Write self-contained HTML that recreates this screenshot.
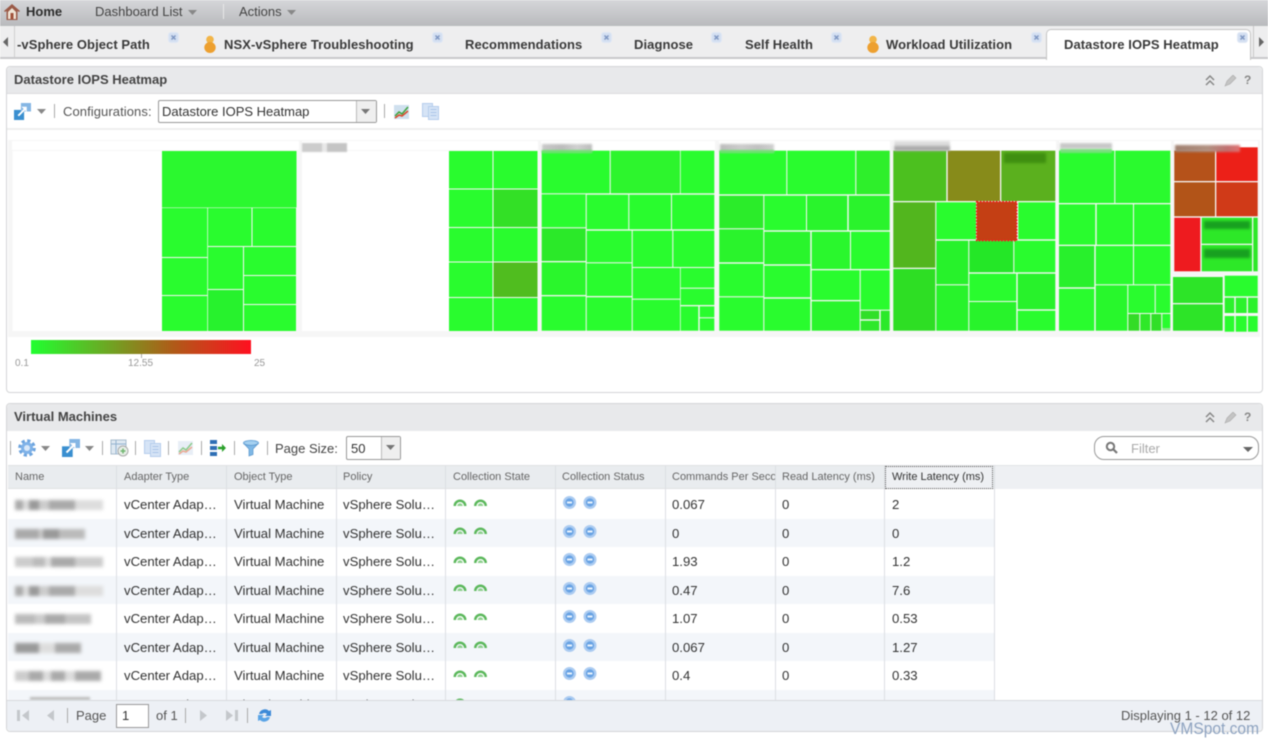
<!DOCTYPE html>
<html><head><meta charset="utf-8"><title>Datastore IOPS Heatmap</title>
<style>
html,body{margin:0;padding:0;background:#fff;width:1268px;height:739px;overflow:hidden}
#r{position:absolute;left:0;top:0;width:1268px;height:739px;overflow:hidden;font-family:"Liberation Sans",sans-serif;color:#333;filter:blur(.45px);background:#fff}
#r div,#r span.t,#r svg{position:absolute}
.t{position:absolute;white-space:nowrap}
.tab{font-size:13px;font-weight:bold;color:#3a3a3a;top:37px;letter-spacing:.07px}
.ph{font-size:13px;font-weight:bold;color:#444;left:14px}
.th{font-size:11px;color:#666;top:471px}
.c{font-size:13.15px;color:#333;white-space:nowrap}
.sep{width:1px;background:#aaa}
.vl{width:1px;top:465px;height:235px;background:#dcdfe3}
.nm{left:15px;width:88px;height:10px;filter:blur(1.8px)}
</style></head><body><div id="r">
<svg width="0" height="0"><defs>
<g id="x"><rect x=".5" y=".5" width="10" height="10" rx="2.500" fill="#d3dff1" stroke="#e0e8f5"/><path d="M3.500 3.500l4 4M7.500 3.500l-4 4" stroke="#7f97c2" stroke-width="1.500"/></g>
<g id="p"><circle cx="7" cy="4.500" r="3.800" fill="#f2b548"/><ellipse cx="7" cy="12.500" rx="5.700" ry="5.500" fill="#eda030"/></g>
<g id="a"><path d="M.5 8a6.500 6.500 0 0 1 13 0h-2.500a4 4 0 0 0-8 0z" fill="#5cb85c"/><path d="M4.300 8a2.700 2.700 0 0 1 5.400 0z" fill="#8ed08e"/></g>
<g id="b"><circle cx="6.500" cy="6.500" r="6.500" fill="#abcbf1"/><circle cx="6.500" cy="6.500" r="4.100" fill="#68a3e4"/><rect x="4" y="5.500" width="5" height="2" fill="#e8f2fc"/></g>
<g id="link"><rect x="0" y="6.500" width="9.500" height="9.500" fill="#3a8fd0"/><rect x="6.500" y="0" width="9.500" height="8" fill="#85b6e4"/><path d="M4 12l6-6" stroke="#fff" stroke-width="1.800" fill="none"/><path d="M7 3.500h5v5z" fill="#fff"/></g>
<g id="cp"><rect x=".5" y=".5" width="10" height="13" fill="#d6e4f6" stroke="#b5cdec"/><rect x="6.500" y="3.500" width="10" height="13" fill="#d6e4f6" stroke="#b5cdec"/><path d="M8.500 6.500h6M8.500 9.500h6M8.500 12.500h6" stroke="#a9c4e8"/></g>
<g id="ch"><rect x="0" y="1" width="15" height="14" fill="#e8eef6"/><path d="M1 12l4-4 3 2 6-7" stroke="#8ccb8c" stroke-width="1.500" fill="none"/><path d="M1 14l4-3 3 1 6-5" stroke="#eba994" stroke-width="1.500" fill="none"/></g>
</defs></svg>

<!-- top bar -->
<div style="left:0;top:0;width:1268px;height:26px;background:linear-gradient(#d5d6d9,#b9babd)"></div>
<svg style="left:4px;top:3px" width="16" height="17" viewBox="0 0 16 17"><path d="M8 1L0 8l1 1 1.500-1v9h11V8l1.500 1 1-1z" fill="#9a5a48"/><path d="M4 9l4-4 4 4v7H4z" fill="#efe3d4"/><rect x="6.500" y="10" width="3" height="6" fill="#a0523a"/></svg>
<span class="t" style="left:26px;top:4px;font-size:13px;font-weight:bold;color:#2c2c2c">Home</span>
<span class="t" style="left:95px;top:4px;font-size:13px;color:#444">Dashboard List</span>
<svg style="left:188px;top:10px" width="10" height="6"><path d="M0 0h9L4.500 5z" fill="#888"/></svg>
<div class="sep" style="left:223px;top:4px;height:15px;background:#e8e8e8"></div>
<span class="t" style="left:239px;top:4px;font-size:13px;color:#444">Actions</span>
<svg style="left:287px;top:10px" width="10" height="6"><path d="M0 0h9L4.500 5z" fill="#888"/></svg>

<!-- tabs -->
<div style="left:0;top:26px;width:1268px;height:31px;background:#eeeeef;border-bottom:2px solid #c9c9cb"></div>
<div style="left:14px;top:26px;width:1px;height:31px;background:#d0d0d0"></div>
<svg style="left:3px;top:37px" width="6" height="10"><path d="M5 0v10L0 5z" fill="#666"/></svg>
<div style="left:1253px;top:26px;width:1px;height:31px;background:#c8c8c8"></div>
<svg style="left:1259px;top:37px" width="6" height="10"><path d="M0 0v10l5-5z" fill="#666"/></svg>
<span class="t tab" style="left:17px">-vSphere Object Path</span>
<svg style="left:168px;top:32px" width="11" height="11"><use href="#x"/></svg>
<svg style="left:203px;top:35px" width="14" height="18"><use href="#p"/></svg>
<span class="t tab" style="left:224px">NSX-vSphere Troubleshooting</span>
<svg style="left:432px;top:32px" width="11" height="11"><use href="#x"/></svg>
<span class="t tab" style="left:465px">Recommendations</span>
<svg style="left:601px;top:32px" width="11" height="11"><use href="#x"/></svg>
<span class="t tab" style="left:634px">Diagnose</span>
<svg style="left:711px;top:32px" width="11" height="11"><use href="#x"/></svg>
<span class="t tab" style="left:745px">Self Health</span>
<svg style="left:831px;top:32px" width="11" height="11"><use href="#x"/></svg>
<svg style="left:866px;top:35px" width="14" height="18"><use href="#p"/></svg>
<span class="t tab" style="left:886px">Workload Utilization</span>
<svg style="left:1031px;top:32px" width="11" height="11"><use href="#x"/></svg>
<div style="left:1046px;top:29px;width:203px;height:30px;background:#fff;border:1px solid #c4c4c4;border-bottom:0;border-radius:5px 5px 0 0"></div>
<span class="t tab" style="left:1064px">Datastore IOPS Heatmap</span>
<svg style="left:1237px;top:32px" width="11" height="11"><use href="#x"/></svg>

<!-- panel 1 -->
<div style="left:6px;top:66px;width:1255px;height:325px;border:1px solid #d4d5d7;border-radius:4px;background:#fff"></div>
<div style="left:7px;top:67px;width:1255px;height:26px;background:#e8e9eb;border-bottom:1px solid #dcdde0;border-radius:4px 4px 0 0"></div>
<span class="t ph" style="top:72px">Datastore IOPS Heatmap</span>
<svg style="left:1205px;top:75px" width="46" height="12" viewBox="0 0 46 12"><path d="M1 5l4-4 4 4M1 10l4-4 4 4" stroke="#888" stroke-width="1.500" fill="none"/><path d="M20 11l2-5 6-6 3 3-6 6z" fill="#c4c4c4" stroke="#aaa" stroke-width=".6"/></svg>
<span class="t" style="left:1244px;top:73px;font-size:12px;font-weight:bold;color:#888">?</span>

<svg style="left:14px;top:103px" width="17" height="17" viewBox="0 0 16 16"><use href="#link"/></svg>
<svg style="left:37px;top:109px" width="10" height="6"><path d="M0 0h9L4.500 5z" fill="#888"/></svg>
<div class="sep" style="left:54px;top:104px;height:14px"></div>
<span class="t" style="left:63px;top:104px;font-size:13px;color:#555;letter-spacing:.08px">Configurations:</span>
<div style="left:158px;top:100px;width:217px;height:21px;border:1px solid #999;border-radius:2px;background:#fff"></div>
<div style="left:356px;top:101px;width:19px;height:21px;background:#efefef;border-left:1px solid #bbb"></div>
<svg style="left:361px;top:109px" width="10" height="6"><path d="M0 0h9L4.500 5z" fill="#777"/></svg>
<span class="t" style="left:162px;top:104px;font-size:13px;color:#333">Datastore IOPS Heatmap</span>
<div class="sep" style="left:384px;top:104px;height:14px"></div>
<svg style="left:394px;top:104px" width="16" height="16"><rect x="0" y="1" width="15" height="14" fill="#cfe0ee"/><path d="M1 12l4-4 3 2 6-7" stroke="#3ea23e" stroke-width="1.500" fill="none"/><path d="M1 14l4-3 3 1 6-5" stroke="#d9482a" stroke-width="1.500" fill="none"/></svg>
<svg style="left:422px;top:103px" width="17" height="17"><use href="#cp"/></svg>

<!-- heatmap -->
<div style="left:7px;top:128px;width:1255px;height:2px;background:#eeeeee"></div>
<svg style="left:8px;top:130px" width="1254" height="208" viewBox="8 130 1254 208">
<rect x="8" y="140" width="1252" height="197" fill="#f6f6f6"/>
<rect x="12" y="141" width="287" height="9" fill="#fff"/><rect x="302" y="141" width="236" height="9" fill="#fff"/><rect x="541" y="141" width="174" height="9" fill="#fff"/><rect x="719" y="141" width="171" height="9" fill="#fff"/><rect x="893" y="141" width="163" height="9" fill="#fff"/><rect x="1059" y="141" width="112" height="9" fill="#fff"/><rect x="1174" y="141" width="84" height="9" fill="#fff"/>
<rect x="12.500" y="151" width="149.500" height="180" fill="#fff"/><rect x="302" y="151" width="147" height="180" fill="#fff"/>
<g fill="#29fc2e">
<rect x="162" y="151" width="134.500" height="56.500" fill="#2bf82f"/>
<rect x="162" y="208" width="45.300" height="49"/><rect x="162" y="258" width="45.300" height="37"/><rect x="162" y="296" width="45.300" height="35"/>
<rect x="208" y="208" width="43.500" height="38"/><rect x="252.500" y="208" width="43.500" height="38"/>
<rect x="208" y="247" width="35" height="42"/><rect x="208" y="290" width="35" height="41" fill="#27f22d"/>
<rect x="244" y="247" width="52" height="28"/><rect x="244" y="276" width="52" height="28"/><rect x="244" y="305" width="52" height="26"/>
<rect x="449" y="151" width="43.500" height="37.500"/><rect x="493.500" y="151" width="44" height="37.500"/>
<rect x="449" y="189.500" width="43.500" height="37.500"/><rect x="493.500" y="189.500" width="44" height="37.500" fill="#33e026"/>
<rect x="449" y="228" width="43.500" height="33.500"/><rect x="493.500" y="228" width="44" height="33.500"/>
<rect x="449" y="262.500" width="43.500" height="34.500"/><rect x="493.500" y="262.500" width="44" height="34.500" fill="#50bd1f"/>
<rect x="449" y="298" width="43.500" height="33"/><rect x="493.500" y="298" width="44" height="33"/>
<!-- g3 -->
<rect x="541.700" y="150.700" width="68" height="42.600"/><rect x="610.700" y="150.700" width="69.300" height="42.600" fill="#2df52d"/><rect x="680.700" y="150.700" width="33.600" height="42.600"/>
<rect x="541.700" y="194.300" width="44" height="33"/><rect x="541.700" y="228.300" width="44" height="32.700" fill="#2be929"/><rect x="541.700" y="262.300" width="44" height="32.700" fill="#2af62c"/><rect x="541.700" y="296.300" width="44" height="34.400"/>
<rect x="586.700" y="194.700" width="41.600" height="34.600"/><rect x="629.300" y="194.700" width="41.700" height="34.600"/><rect x="672" y="194.700" width="42.300" height="34.600"/>
<rect x="586.700" y="230.700" width="45" height="31.600"/><rect x="586.700" y="263.300" width="45" height="32.700"/><rect x="586.700" y="297.300" width="45" height="33.400"/>
<rect x="632.700" y="230.700" width="39.600" height="36.300"/><rect x="673.300" y="230.700" width="41" height="36.300"/>
<rect x="632.700" y="268" width="47.300" height="30.700"/><rect x="632.700" y="299.700" width="47.300" height="31"/>
<rect x="680.700" y="268" width="33.600" height="19.700"/><rect x="680.700" y="288.700" width="33.600" height="16.300"/><rect x="680.700" y="306.300" width="17.600" height="24.400"/><rect x="699.700" y="306.300" width="14.600" height="11"/><rect x="699.700" y="318.300" width="14.600" height="12.400"/>
<!-- g4 -->
<rect x="719.300" y="150.700" width="67" height="43.600"/><rect x="787.300" y="150.700" width="68" height="43.600"/><rect x="856.300" y="150.700" width="33.400" height="43.600" fill="#2eef2b"/>
<rect x="719.300" y="195.700" width="44" height="32.600" fill="#2bec2a"/><rect x="719.300" y="229.300" width="44" height="33" fill="#2af32c"/><rect x="719.300" y="263.700" width="44" height="32.600"/><rect x="719.300" y="297.300" width="44" height="33.400"/>
<rect x="764.300" y="195.700" width="41.700" height="34.600"/><rect x="807" y="195.700" width="40.300" height="34.600" fill="#29f42c"/><rect x="848.700" y="195.700" width="41" height="34.600" fill="#2af32c"/>
<rect x="764.300" y="231.700" width="46" height="32.600" fill="#29f52c"/><rect x="764.300" y="265.700" width="46" height="31.600"/><rect x="764.300" y="298.700" width="46" height="32"/>
<rect x="811.700" y="231.700" width="38.300" height="37.300" fill="#2af72d"/><rect x="851" y="231.700" width="38.700" height="37.300"/>
<rect x="811.700" y="270.300" width="48" height="29.700"/><rect x="811.700" y="301.300" width="48" height="29.400" fill="#29f52c"/>
<rect x="860.700" y="270.300" width="29" height="39.400"/><rect x="860.700" y="310.700" width="18.600" height="8.600" fill="#30df28"/><rect x="860.700" y="320.700" width="18.600" height="10" fill="#2ee82a"/><rect x="880.700" y="310.700" width="9" height="20" fill="#2be92a"/>
<!-- g5 -->
<rect x="893.300" y="150.700" width="53" height="50.300" fill="#4cc01f"/><rect x="947.700" y="150.700" width="52.300" height="50.300" fill="#878b1a"/><rect x="1001.300" y="150.700" width="54" height="50.300" fill="#5bb01e"/>
<rect x="893.300" y="202.300" width="42" height="65.400" fill="#52b61e"/><rect x="893.300" y="269" width="42" height="61.700" fill="#2ede24"/>
<rect x="936.300" y="202.300" width="39.700" height="37"/><rect x="1018.300" y="202.300" width="37" height="37"/>
<rect x="936.300" y="240.700" width="32" height="43.600" fill="#27f22b"/><rect x="936.300" y="285.300" width="32" height="45.400" fill="#28f32b"/>
<rect x="969.300" y="240.700" width="44" height="31.600" fill="#24e727"/><rect x="1014.300" y="240.700" width="41" height="31.600"/>
<rect x="969.300" y="273.700" width="47" height="27.300"/><rect x="969.300" y="302" width="47" height="28.700" fill="#28f32b"/>
<rect x="1017.700" y="273.700" width="37.600" height="35.600" fill="#28f22b"/><rect x="1017.700" y="310.700" width="37.600" height="20"/>
<rect x="976.700" y="201.800" width="40" height="38.800" fill="#c43f14" stroke="#f5151c" stroke-width="1.600" stroke-dasharray="1.600 1.600"/>
<!-- g6 -->
<rect x="1059" y="150.700" width="55.300" height="52.300"/><rect x="1115.300" y="150.700" width="55" height="52.300" fill="#2afa2e"/>
<rect x="1059" y="204.300" width="36.300" height="40.400"/><rect x="1096.700" y="204.300" width="36.300" height="40.400"/><rect x="1134" y="204.300" width="36.300" height="40.400"/>
<rect x="1059" y="246" width="35.300" height="41.300" fill="#28f02c"/><rect x="1059" y="288.700" width="35.300" height="42"/>
<rect x="1095.700" y="246" width="37.300" height="38.300"/><rect x="1134" y="246" width="36.300" height="38.300"/>
<rect x="1095.700" y="285.300" width="31.600" height="45.400" fill="#28f72c"/><rect x="1128.300" y="285.300" width="26.400" height="27.700"/><rect x="1155.700" y="285.300" width="14.600" height="27.700"/>
<rect x="1128.300" y="314" width="11" height="16.700" fill="#33dc27"/><rect x="1140.300" y="314" width="10" height="16.700" fill="#2fe829"/><rect x="1151.300" y="314" width="10" height="16.700" fill="#31df28"/><rect x="1162.300" y="314" width="8" height="14"/><rect x="1162.300" y="328" width="8" height="2.700" fill="#8ee88e"/>
<!-- g7 -->
<rect x="1174.300" y="150.700" width="40.700" height="30.300" fill="#b5521a"/><rect x="1174.300" y="182.300" width="40.700" height="34" fill="#b25418"/>
<rect x="1216.300" y="147.300" width="41.400" height="33.700" fill="#ec2018"/><rect x="1216.300" y="182.300" width="41.400" height="34" fill="#d03a18"/>
<rect x="1174.300" y="217.700" width="26" height="53.600" fill="#ee1b1f"/>
<rect x="1201.700" y="217.700" width="50.300" height="26" fill="#2de828"/><rect x="1201.700" y="245" width="50.300" height="26.300" fill="#2de828"/><rect x="1253.300" y="217.700" width="4.400" height="53.600" fill="#2de828"/>
<rect x="1173" y="277" width="49.700" height="26" fill="#2de428"/><rect x="1173" y="304.300" width="49.700" height="26.400" fill="#2de428"/>
<rect x="1224.700" y="275.700" width="33" height="20.600"/>
<rect x="1224.700" y="297.700" width="9.600" height="15.300" fill="#2bf22c"/><rect x="1235.700" y="297.700" width="11" height="15.300" fill="#2bf22c"/><rect x="1248" y="297.700" width="9.700" height="15.300" fill="#2bf22c"/>
<rect x="1224.700" y="316" width="9.600" height="15.700"/><rect x="1235.700" y="316" width="11" height="15.700"/><rect x="1248" y="316" width="9.700" height="15.700"/>
</g>
</svg>
<!-- blurred heatmap labels -->
<div style="left:302px;top:143px;width:45px;height:9px;filter:blur(.9px);background:linear-gradient(90deg,#ccc 0 20px,#e8e8e8 20px 25px,#c4c4c4 25px 45px)"></div>
<div style="left:542px;top:144px;width:50px;height:8px;filter:blur(1px);background:linear-gradient(90deg,#c8c8c8,#bbb 40%,#d0d0d0 70%,#bbb)"></div>
<div style="left:542px;top:150px;width:50px;height:3px;background:#6ee070;filter:blur(.7px)"></div>
<div style="left:720px;top:144px;width:54px;height:8px;filter:blur(1px);background:linear-gradient(90deg,#bbb,#ccc 40%,#c0c0c0 70%,#d0d0d0)"></div>
<div style="left:720px;top:150px;width:54px;height:3px;background:#6ee070;filter:blur(.7px)"></div>
<div style="left:894px;top:141px;width:56px;height:10px;filter:blur(1px);background:linear-gradient(#ddd 40%,#aaa 60%)"></div>
<div style="left:1060px;top:143px;width:52px;height:6px;filter:blur(1px);background:#c8c8c8"></div>
<div style="left:1060px;top:149px;width:52px;height:4px;filter:blur(.7px);background:#7ade7e"></div>
<div style="left:1175px;top:145px;width:65px;height:7px;filter:blur(1px);background:linear-gradient(90deg,#a08070,#b09080 50%,#c07070 80%,#e07070)"></div>
<div style="left:1004px;top:153px;width:42px;height:10px;filter:blur(1.4px);background:#3f8f10"></div>
<div style="left:1204px;top:221px;width:46px;height:8px;filter:blur(1.4px);background:#18a020"></div>
<div style="left:1204px;top:249px;width:46px;height:9px;filter:blur(1.4px);background:#18a020"></div>

<!-- legend -->
<div style="left:31px;top:340px;width:220px;height:14px;background:linear-gradient(90deg,#20ff30,#b05a18 65%,#ff1020)"></div>
<div style="left:141px;top:354px;width:1px;height:4px;background:#aaa"></div>
<span class="t" style="left:15px;top:358px;font-size:10px;color:#999">0.1</span>
<span class="t" style="left:128px;top:358px;font-size:10px;color:#999">12.55</span>
<span class="t" style="left:254px;top:358px;font-size:10px;color:#999">25</span>

<!-- panel 2 -->
<div style="left:6px;top:403px;width:1255px;height:327px;border:1px solid #d4d5d7;border-radius:4px;background:#fff"></div>
<div style="left:7px;top:404px;width:1255px;height:27px;background:#e8e9eb;border-radius:4px 4px 0 0"></div>
<span class="t ph" style="top:409px">Virtual Machines</span>
<svg style="left:1205px;top:412px" width="46" height="12" viewBox="0 0 46 12"><path d="M1 5l4-4 4 4M1 10l4-4 4 4" stroke="#888" stroke-width="1.500" fill="none"/><path d="M20 11l2-5 6-6 3 3-6 6z" fill="#c4c4c4" stroke="#aaa" stroke-width=".6"/></svg>
<span class="t" style="left:1244px;top:410px;font-size:12px;font-weight:bold;color:#888">?</span>

<div class="sep" style="left:10px;top:441px;height:14px"></div>
<svg style="left:18px;top:439px" width="18" height="18" viewBox="0 0 18 18"><circle cx="9" cy="9" r="7.200" fill="none" stroke="#6da4de" stroke-width="3.200" stroke-dasharray="3.200 2.450"/><circle cx="9" cy="9" r="6" fill="#7fb2e8"/><circle cx="9" cy="9" r="3" fill="#d8e8f9"/></svg>
<svg style="left:41px;top:446px" width="10" height="6"><path d="M0 0h9L4.500 5z" fill="#888"/></svg>
<svg style="left:62px;top:439px" width="18" height="18" viewBox="0 0 16 16"><use href="#link"/></svg>
<svg style="left:85px;top:446px" width="10" height="6"><path d="M0 0h9L4.500 5z" fill="#888"/></svg>
<div class="sep" style="left:102px;top:441px;height:14px"></div>
<svg style="left:110px;top:439px" width="19" height="18"><rect x="1" y="1" width="15" height="14" fill="#dfe9f2" stroke="#a8bccd"/><path d="M1 5h15M6 1v14" stroke="#93b2cf"/><circle cx="13" cy="12" r="5" fill="#e8efe8" stroke="#aaa"/><path d="M10.500 12h5M13 9.500v5" stroke="#6fb56f" stroke-width="1.500"/></svg>
<div class="sep" style="left:135px;top:441px;height:14px"></div>
<svg style="left:144px;top:440px" width="17" height="17"><use href="#cp"/></svg>
<div class="sep" style="left:168px;top:441px;height:14px"></div>
<svg style="left:178px;top:440px" width="16" height="16"><use href="#ch"/></svg>
<div class="sep" style="left:201px;top:441px;height:14px"></div>
<svg style="left:210px;top:440px" width="17" height="17"><rect x="0" y="0" width="7" height="4" fill="#2e6fb5"/><rect x="0" y="6" width="7" height="4" fill="#2e6fb5"/><rect x="0" y="12" width="7" height="4" fill="#2e6fb5"/><path d="M8 8h5" stroke="#2aa02a" stroke-width="2.500"/><path d="M12 4l4 4-4 4z" fill="#2aa02a"/></svg>
<div class="sep" style="left:234px;top:441px;height:14px"></div>
<svg style="left:243px;top:440px" width="17" height="17"><ellipse cx="8" cy="3" rx="7.500" ry="2.500" fill="#a5d0f0" stroke="#6aa5d8"/><path d="M.8 3.500L6 9v7l4-1.500V9l5.200-5.500C13 6 3 6 .8 3.500z" fill="#7fb8e6" stroke="#5a96cc" stroke-width=".7"/></svg>
<div class="sep" style="left:267px;top:441px;height:14px"></div>
<span class="t" style="left:275px;top:441px;font-size:13px;color:#444">Page Size:</span>
<div style="left:346px;top:436px;width:53px;height:22px;border:1px solid #999;border-radius:2px;background:#fff"></div>
<div style="left:381px;top:437px;width:18px;height:22px;background:#efefef;border-left:1px solid #bbb"></div>
<svg style="left:386px;top:445px" width="10" height="6"><path d="M0 0h9L4.500 5z" fill="#777"/></svg>
<span class="t" style="left:351px;top:441px;font-size:13px;color:#333">50</span>
<div style="left:1094px;top:436px;width:163px;height:22px;border:1px solid #999;border-radius:10px;background:#fff"></div>
<svg style="left:1105px;top:441px" width="13" height="13"><circle cx="5.500" cy="5.500" r="3.700" fill="none" stroke="#777" stroke-width="2"/><path d="M8.500 8.500l3.500 3.500" stroke="#777" stroke-width="2.200"/></svg>
<span class="t" style="left:1131px;top:441px;font-size:13px;color:#aaa">Filter</span>
<svg style="left:1243px;top:447px" width="11" height="6"><path d="M0 0h10L5 5z" fill="#666"/></svg>

<!-- grid -->
<div style="left:8px;top:465px;width:986px;height:24px;background:#e9ecef;border-top:1px solid #e0e1e3;border-bottom:1px solid #e0e1e3;box-sizing:border-box"></div>
<div style="left:994px;top:465px;width:268px;height:24px;background:#eef0f3;border-top:1px solid #e2e3e5;box-sizing:border-box"></div>
<div style="left:8px;top:518.500px;width:986px;height:28.500px;background:#f3f6fa"></div>
<div style="left:8px;top:575.500px;width:986px;height:28.500px;background:#f3f6fa"></div>
<div style="left:8px;top:632.500px;width:986px;height:28.500px;background:#f3f6fa"></div>
<div style="left:8px;top:689.500px;width:986px;height:12px;background:#f3f6fa"></div>
<div class="vl" style="left:116px"></div><div class="vl" style="left:226px"></div><div class="vl" style="left:336px"></div><div class="vl" style="left:445px"></div><div class="vl" style="left:555px"></div><div class="vl" style="left:665px"></div><div class="vl" style="left:775px"></div><div class="vl" style="left:884px"></div><div class="vl" style="left:994px"></div>

<span class="t th" style="left:15px">Name</span>
<span class="t th" style="left:124px">Adapter Type</span>
<span class="t th" style="left:234px">Object Type</span>
<span class="t th" style="left:343px">Policy</span>
<span class="t th" style="left:453px">Collection State</span>
<span class="t th" style="left:562px">Collection Status</span>
<div style="left:672px;top:471px;width:103px;height:14px;overflow:hidden;font-size:11px;color:#666;white-space:nowrap">Commands Per Second</div>
<span class="t th" style="left:782px">Read Latency (ms)</span>
<div style="left:885px;top:466px;width:106px;height:21px;border:1px dotted #555;background:#eef0f3"></div>
<span class="t th" style="left:892px;color:#333">Write Latency (ms)</span>

<!-- rows -->
<div class="nm" style="top:500px;background:linear-gradient(90deg,#aaa 0 8px,#ddd 8px 14px,#999 14px 24px,#ccc 24px 34px,#aaa 34px 60px,#ddd 60px 88px)"></div>
<div class="nm" style="top:529px;width:70px;background:linear-gradient(90deg,#aaa 0 24px,#ccc 24px 28px,#999 28px 44px,#bbb 44px 70px)"></div>
<div class="nm" style="top:557px;background:linear-gradient(90deg,#ccc 0 18px,#bbb 18px 30px,#ddd 30px 36px,#aaa 36px 60px,#ccc 60px 88px)"></div>
<div class="nm" style="top:586px;background:linear-gradient(90deg,#aaa 0 8px,#ddd 8px 14px,#999 14px 24px,#ccc 24px 34px,#aaa 34px 60px,#ddd 60px 88px)"></div>
<div class="nm" style="top:614px;width:76px;background:linear-gradient(90deg,#bbb 0 20px,#ccc 20px 30px,#aaa 30px 50px,#c4c4c4 50px 76px)"></div>
<div class="nm" style="top:643px;width:66px;background:linear-gradient(90deg,#999 0 24px,#ddd 24px 40px,#aaa 40px 66px)"></div>
<div class="nm" style="top:671px;width:86px;background:linear-gradient(90deg,#ccc 0 14px,#aaa 14px 28px,#ddd 28px 36px,#aaa 36px 50px,#ddd 50px 60px,#aaa 60px 86px)"></div>
<div style="left:30px;top:697px;width:60px;height:3px;background:#bbb;filter:blur(1px)"></div>

<span class="t c" style="left:124px;top:497px">vCenter Adap…</span><span class="t c" style="left:234px;top:497px">Virtual Machine</span><span class="t c" style="left:343px;top:497px">vSphere Solu…</span><span class="t c" style="left:672px;top:497px">0.067</span><span class="t c" style="left:782px;top:497px">0</span><span class="t c" style="left:892px;top:497px">2</span>
<span class="t c" style="left:124px;top:525.500px">vCenter Adap…</span><span class="t c" style="left:234px;top:525.500px">Virtual Machine</span><span class="t c" style="left:343px;top:525.500px">vSphere Solu…</span><span class="t c" style="left:672px;top:525.500px">0</span><span class="t c" style="left:782px;top:525.500px">0</span><span class="t c" style="left:892px;top:525.500px">0</span>
<span class="t c" style="left:124px;top:554px">vCenter Adap…</span><span class="t c" style="left:234px;top:554px">Virtual Machine</span><span class="t c" style="left:343px;top:554px">vSphere Solu…</span><span class="t c" style="left:672px;top:554px">1.93</span><span class="t c" style="left:782px;top:554px">0</span><span class="t c" style="left:892px;top:554px">1.2</span>
<span class="t c" style="left:124px;top:582.500px">vCenter Adap…</span><span class="t c" style="left:234px;top:582.500px">Virtual Machine</span><span class="t c" style="left:343px;top:582.500px">vSphere Solu…</span><span class="t c" style="left:672px;top:582.500px">0.47</span><span class="t c" style="left:782px;top:582.500px">0</span><span class="t c" style="left:892px;top:582.500px">7.6</span>
<span class="t c" style="left:124px;top:611px">vCenter Adap…</span><span class="t c" style="left:234px;top:611px">Virtual Machine</span><span class="t c" style="left:343px;top:611px">vSphere Solu…</span><span class="t c" style="left:672px;top:611px">1.07</span><span class="t c" style="left:782px;top:611px">0</span><span class="t c" style="left:892px;top:611px">0.53</span>
<span class="t c" style="left:124px;top:639.500px">vCenter Adap…</span><span class="t c" style="left:234px;top:639.500px">Virtual Machine</span><span class="t c" style="left:343px;top:639.500px">vSphere Solu…</span><span class="t c" style="left:672px;top:639.500px">0.067</span><span class="t c" style="left:782px;top:639.500px">0</span><span class="t c" style="left:892px;top:639.500px">1.27</span>
<span class="t c" style="left:124px;top:668px">vCenter Adap…</span><span class="t c" style="left:234px;top:668px">Virtual Machine</span><span class="t c" style="left:343px;top:668px">vSphere Solu…</span><span class="t c" style="left:672px;top:668px">0.4</span><span class="t c" style="left:782px;top:668px">0</span><span class="t c" style="left:892px;top:668px">0.33</span>
<span class="t c" style="left:124px;top:696.500px">vCenter Adap…</span><span class="t c" style="left:234px;top:696.500px">Virtual Machine</span><span class="t c" style="left:343px;top:696.500px">vSphere Solu…</span>

<svg style="left:453px;top:498px" width="34" height="10"><use href="#a"/><use href="#a" x="20.500"/></svg>
<svg style="left:453px;top:526px" width="34" height="10"><use href="#a"/><use href="#a" x="20.500"/></svg>
<svg style="left:453px;top:555px" width="34" height="10"><use href="#a"/><use href="#a" x="20.500"/></svg>
<svg style="left:453px;top:583px" width="34" height="10"><use href="#a"/><use href="#a" x="20.500"/></svg>
<svg style="left:453px;top:612px" width="34" height="10"><use href="#a"/><use href="#a" x="20.500"/></svg>
<svg style="left:453px;top:640px" width="34" height="10"><use href="#a"/><use href="#a" x="20.500"/></svg>
<svg style="left:453px;top:669px" width="34" height="10"><use href="#a"/><use href="#a" x="20.500"/></svg>
<svg style="left:453px;top:697px" width="14" height="10"><use href="#a"/></svg>
<svg style="left:563px;top:496px" width="34" height="13"><use href="#b"/><use href="#b" x="20.500"/></svg>
<svg style="left:563px;top:524.500px" width="34" height="13"><use href="#b"/><use href="#b" x="20.500"/></svg>
<svg style="left:563px;top:553px" width="34" height="13"><use href="#b"/><use href="#b" x="20.500"/></svg>
<svg style="left:563px;top:581.500px" width="34" height="13"><use href="#b"/><use href="#b" x="20.500"/></svg>
<svg style="left:563px;top:610px" width="34" height="13"><use href="#b"/><use href="#b" x="20.500"/></svg>
<svg style="left:563px;top:638.500px" width="34" height="13"><use href="#b"/><use href="#b" x="20.500"/></svg>
<svg style="left:563px;top:667px" width="34" height="13"><use href="#b"/><use href="#b" x="20.500"/></svg>
<svg style="left:563px;top:695.500px" width="13" height="13"><use href="#b"/></svg>

<!-- pager -->
<div style="left:7px;top:700px;width:1255px;height:31px;background:#edf0f5;border-top:1px solid #d8dade;border-radius:0 0 4px 4px;box-sizing:border-box"></div>
<svg style="left:17px;top:709px" width="14" height="13"><rect x="0" y="1" width="3" height="11" fill="#c4c7cb"/><path d="M12 1v11L5 6.500z" fill="#c4c7cb"/></svg>
<svg style="left:46px;top:709px" width="9" height="13"><path d="M8 1v11L1 6.500z" fill="#c4c7cb"/></svg>
<div class="sep" style="left:67px;top:708px;height:15px"></div>
<span class="t" style="left:76px;top:708px;font-size:13px;color:#555">Page</span>
<div style="left:116px;top:704px;width:31px;height:22px;border:1px solid #999;background:#fff"></div>
<span class="t" style="left:122px;top:708px;font-size:13px;color:#333">1</span>
<span class="t" style="left:156px;top:708px;font-size:13px;color:#555">of 1</span>
<div class="sep" style="left:185px;top:708px;height:15px"></div>
<svg style="left:199px;top:709px" width="9" height="13"><path d="M1 1v11l7-5.500z" fill="#c4c7cb"/></svg>
<svg style="left:225px;top:709px" width="14" height="13"><path d="M1 1v11l7-5.500z" fill="#c4c7cb"/><rect x="10" y="1" width="3" height="11" fill="#c4c7cb"/></svg>
<div class="sep" style="left:247px;top:708px;height:15px"></div>
<svg style="left:256px;top:707px" width="17" height="17" viewBox="0 0 17 17"><path d="M3 7a6 6 0 0 1 10-3l2-1v6h-6l2-2a3.500 3.500 0 0 0-5 0z" fill="#3c8ad8"/><path d="M14 10a6 6 0 0 1-10 3l-2 1V8h6l-2 2a3.500 3.500 0 0 0 5 0z" fill="#5aa4e6"/></svg>
<span class="t" style="left:1121px;top:708px;font-size:13px;color:#555">Displaying 1 - 12 of 12</span>
<span class="t" style="left:1170px;top:719px;font-size:17px;color:#8ea3c0;transform:scaleX(.915);transform-origin:left top">VMSpot.com</span>
</div></body></html>
